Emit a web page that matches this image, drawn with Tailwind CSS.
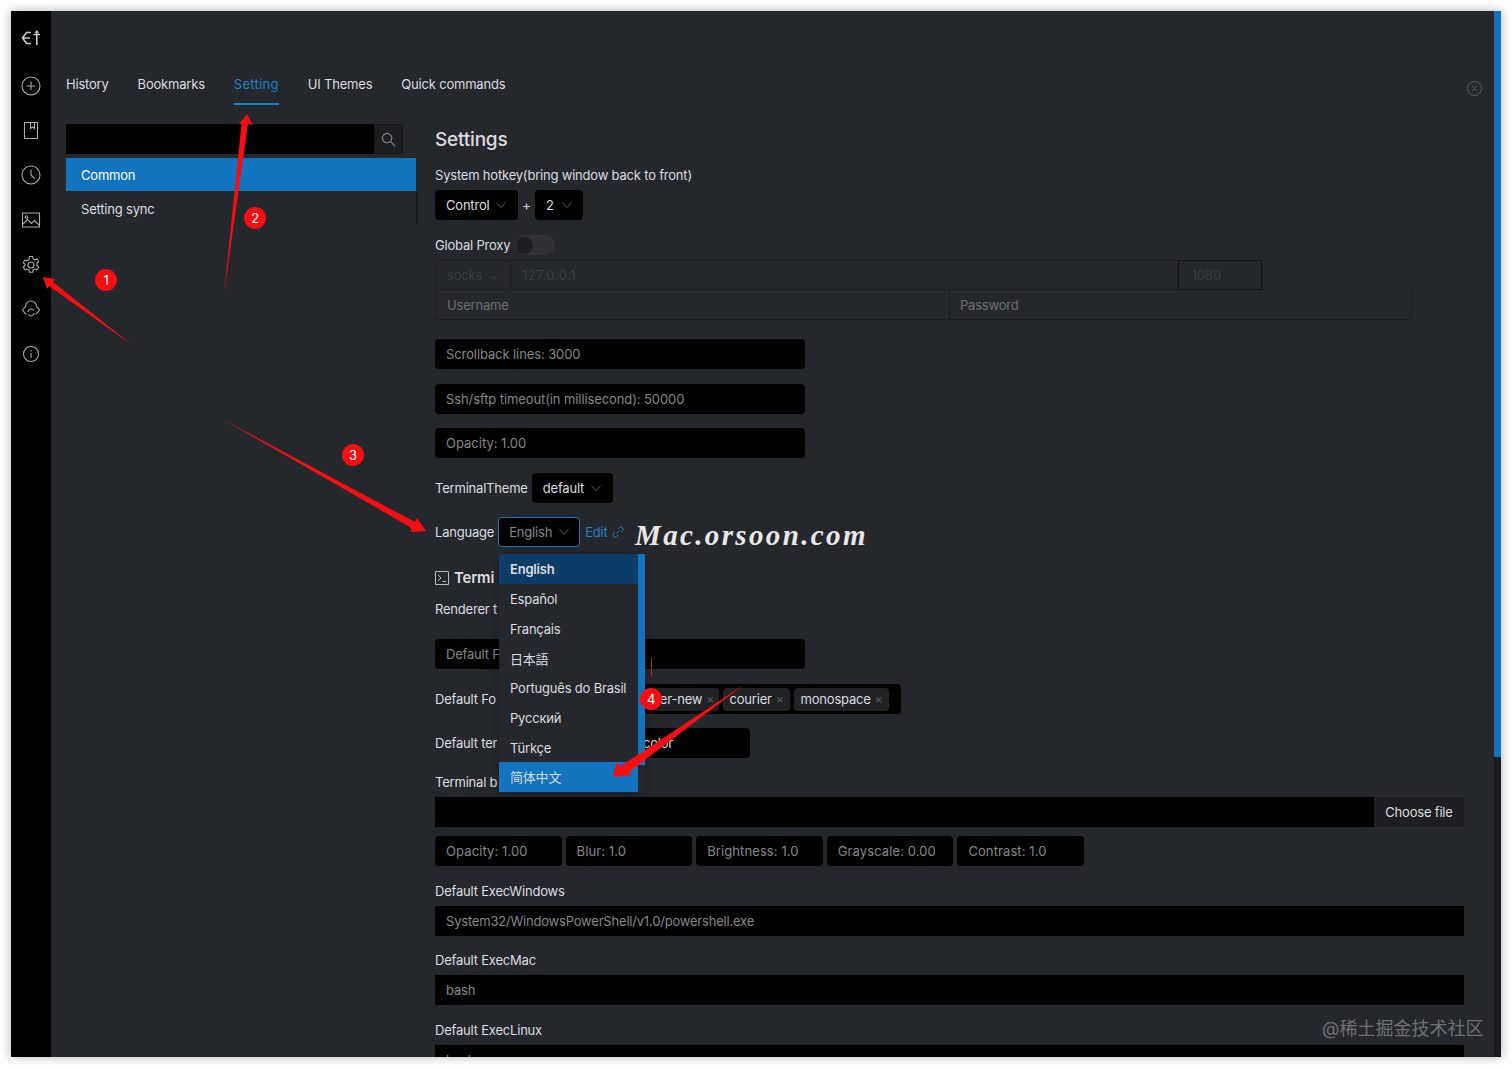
<!DOCTYPE html>
<html lang="en">
<head>
  <meta charset="UTF-8">
  <title>Electerm settings</title>
  <script src="https://cdn.jsdelivr.net/npm/@tailwindcss/browser@4"></script>
</head>
<body class="bg-white font-['Inter','Noto_Sans_CJK_SC',sans-serif] text-[13px] leading-[20px] tracking-[-0.2px] text-[#dcdde0]">
  <div class="p-[11px] h-[1068px] w-[1512px] overflow-hidden">
    <!-- app window -->
    <div class="relative flex h-[1046px] w-[1490px] overflow-hidden bg-[#24272c] shadow-[0_0_10px_rgba(0,0,0,0.3)]">

      <!-- icon rail -->
      <div class="w-10 shrink-0 bg-black flex flex-col items-center text-[#a9abae]">
        <div class="h-[65px] pt-[17px] text-[#c9cacc]">
          <svg width="20" height="20" viewBox="0 0 20 20" fill="none" stroke="currentColor" stroke-width="1.6"><path d="M10 4.500H5.500L1.500 10 5.500 15.500H10M2.500 10H9"/><path d="M12.500 6.500H19M15.800 3V17"/><path d="M14 5l1.800-2.500L17.600 5" stroke-width="1"/></svg>
        </div>
        <div class="flex flex-col items-center gap-[24.700px]">
          <svg width="20" height="20" viewBox="0 0 20 20" fill="none" stroke="currentColor" stroke-width="1.100"><circle cx="10" cy="10" r="9"/><path d="M10 5.500v9M5.500 10h9"/></svg>
          <svg width="20" height="20" viewBox="0 0 20 20" fill="none" stroke="currentColor" stroke-width="1.100"><path d="M3.500 1.500h13v16h-13z"/><path d="M9.500 1.500v6l2-1.500 2 1.500v-6"/></svg>
          <svg width="20" height="20" viewBox="0 0 20 20" fill="none" stroke="currentColor" stroke-width="1.100"><circle cx="10" cy="10" r="9"/><path d="M10 4.500V10l3.500 3.500"/></svg>
          <svg width="20" height="20" viewBox="0 0 20 20" fill="none" stroke="currentColor" stroke-width="1.100"><path d="M1.500 3h17v14h-17z"/><path d="M1.500 14.500l5-5 4 4 3-3 5 5"/><circle cx="5.500" cy="7" r="1.300"/></svg>
          <svg width="20" height="20" viewBox="0 0 20 20" fill="none" stroke="currentColor" stroke-width="1.100"><circle cx="10" cy="10" r="3"/><path d="M8.400 1.500h3.200l.5 2.400 1.700.9 2.300-.9 1.600 2.800-1.800 1.600v2.200l1.800 1.600-1.600 2.800-2.300-.9-1.700.9-.5 2.400H8.400l-.5-2.400-1.700-.9-2.300.9-1.600-2.800 1.800-1.600V9.300L2.300 7.700l1.600-2.800 2.300.9 1.700-.9z"/></svg>
          <svg width="20" height="20" viewBox="0 0 20 20" fill="none" stroke="currentColor" stroke-width="1.100"><path d="M5.500 15H4.500l-3-4 3-3.500a5.500 5.500 0 0 1 11 0l3 3.500-3 4h-1"/><path d="M6.800 13a3.300 3.300 0 0 1 6-1.500M13.200 14a3.300 3.300 0 0 1-6 1.500"/></svg>
          <svg width="20" height="20" viewBox="0 0 20 20" fill="none" stroke="currentColor" stroke-width="1.100"><circle cx="10" cy="10" r="7.500"/><path d="M10 9v5M10 6v1.500"/></svg>
        </div>
      </div>

      <!-- main area -->
      <div class="flex-1 min-w-0 flex flex-col pl-[15px]">
        <!-- tabs -->
        <div class="mt-[62px] h-[32px] flex gap-[29px] shrink-0">
          <div class="h-[32px] pt-px">History</div>
          <div class="h-[32px] pt-px">Bookmarks</div>
          <div class="h-[32px] pt-px text-[#1f7fc9] border-b-2 border-[#1f7fc9] tracking-[0.3px]">Setting</div>
          <div class="h-[32px] pt-px">UI Themes</div>
          <div class="h-[32px] pt-px">Quick commands</div>
        </div>

        <div class="flex flex-1 min-h-0 mt-[19px]">
          <!-- left list -->
          <div class="w-[350px] shrink-0">
            <div class="flex h-[30px] w-[337px]">
              <div class="flex-1 bg-black"></div>
              <div class="w-[29px] bg-[#1c1e21] border border-[#15171a] flex items-center justify-center text-[#85878b]">
                <svg width="15" height="15" viewBox="0 0 16 16" fill="none" stroke="currentColor" stroke-width="1.200"><circle cx="6.500" cy="6.500" r="5"/><path d="M10 10l5 5"/></svg>
              </div>
            </div>
            <div class="h-[33px] mt-[4px] pl-[15px] flex items-center bg-[#1273bf] text-white">Common</div>
            <div class="h-[36px] pl-[15px] flex items-center">Setting sync</div>
          </div>
          <div class="w-[2px] h-[33px] mt-[67px] bg-[#191b1f]"></div>

          <!-- settings form -->
          <div class="ml-[17px] w-[1029px] relative flex flex-col *:shrink-0">
            <div class="text-[19px] leading-[28px] font-medium mt-[2px]">Settings</div>
            <div class="mt-[11px]">System hotkey(bring window back to front)</div>
            <div class="mt-[5px] flex items-center h-[30px]">
              <div class="h-[30px] w-[83px] bg-black rounded-sm flex items-center pl-[11px] gap-[7px]">Control <svg class="text-[#55585c]" width="10" height="6" viewBox="0 0 10 6" fill="none" stroke="currentColor"><path d="M.5.500L5 5.500 9.500.500"/></svg></div>
              <span class="w-[17px] text-center">+</span>
              <div class="h-[30px] w-[48px] bg-black rounded-sm flex items-center pl-[11px] gap-[8px]">2 <svg class="text-[#55585c]" width="10" height="6" viewBox="0 0 10 6" fill="none" stroke="currentColor"><path d="M.5.500L5 5.500 9.500.500"/></svg></div>
            </div>
            <div class="mt-[15px] h-[20px] flex items-center gap-[5px]">Global Proxy
              <div class="w-10 h-[20px] rounded-full bg-[#2f3136] pl-[1px] flex items-center"><div class="w-[17px] h-[17px] rounded-full bg-[#1c1e22]"></div></div>
            </div>
            <div class="mt-[5px] flex h-[30px] w-[827px] border border-[#1c1e21] text-[#3a3d42]">
              <div class="w-[75px] border-r border-[#191b1e] pl-[11px] flex items-center">socks <span class="ml-[8px] text-[10px]">⌄</span></div>
              <div class="flex-1 pl-[11px] flex items-center tracking-[0.5px]">127.0.0.1</div>
              <div class="w-[84px] -my-px -mr-px border border-[#111316] pl-[13px] flex items-center">1080</div>
            </div>
            <div class="flex h-[30px] w-[977px] border border-t-0 border-[#1c1e21] text-[#6d7074]">
              <div class="w-[514px] border-r border-[#1c1e21] pl-[11px] flex items-center">Username</div>
              <div class="flex-1 pl-[10px] flex items-center">Password</div>
            </div>

            <div class="mt-[19px] w-[370px] h-[30px] bg-black rounded-sm pl-[11px] flex items-center text-[#85878b] tracking-[-0.1px]">Scrollback lines: 3000</div>
            <div class="mt-[15px] w-[370px] h-[30px] bg-black rounded-sm pl-[11px] flex items-center text-[#85878b] tracking-[-0.1px]">Ssh/sftp timeout(in millisecond): 50000</div>
            <div class="mt-[14px] w-[370px] h-[30px] bg-black rounded-sm pl-[11px] flex items-center text-[#85878b] tracking-normal">Opacity: 1.00</div>

            <div class="mt-[15px] h-[30px] flex items-center gap-[4px]">TerminalTheme
              <div class="h-[30px] w-[81px] bg-black rounded-sm flex items-center pl-[11px] gap-[7px]">default <svg class="text-[#55585c]" width="10" height="6" viewBox="0 0 10 6" fill="none" stroke="currentColor"><path d="M.5.500L5 5.500 9.500.500"/></svg></div>
            </div>
            <div class="mt-[14px] h-[30px] flex items-center gap-[4px]">Language
              <div class="h-[30px] w-[82px] bg-black border border-[#1b77bd] rounded-sm flex items-center pl-[10px] gap-[7px] text-[#85878b]">English <svg class="text-[#55585c]" width="10" height="6" viewBox="0 0 10 6" fill="none" stroke="currentColor"><path d="M.5.500L5 5.500 9.500.500"/></svg></div>
              <span class="text-[#1f7fc9] flex items-center gap-[4px] ml-px">Edit <svg width="12" height="12" viewBox="0 0 12 12" fill="none" stroke="currentColor"><path d="M4.500 7.500l3-3M6 3l1.500-1.500a2.100 2.100 0 0 1 3 3L9 6M6 9l-1.500 1.500a2.100 2.100 0 0 1-3-3L3 6"/></svg></span>
            </div>

            <div class="mt-[20px] h-[22px] flex items-center gap-[5px]">
              <svg class="text-[#b9babd]" width="14" height="14" viewBox="0 0 14 14" fill="none" stroke="currentColor"><path d="M.5.500h13v13H.5zM3 4l3 3-3 3M7.500 10.500H11"/></svg>
              <span class="text-[15px] font-semibold">Termi</span>
            </div>
            <div class="mt-[10px]">Renderer t</div>
            <div class="mt-[20px] w-[370px] h-[30px] bg-black rounded-sm pl-[11px] flex items-center text-[#85878b]"><span>Default F</span></div>
            <div class="mt-[15px] h-[30px] flex items-center">
              <span class="w-[64px] whitespace-nowrap">Default Fo</span>
              <div class="ml-[86px] w-[316px] h-[30px] bg-black rounded-sm flex items-center justify-end gap-[4px] pr-[12px]">
                <span class="h-[23px] w-[66px] bg-[#202226] rounded-sm flex items-center justify-end pr-[5px] gap-[4px] whitespace-nowrap"><span>er-new</span> <span class="text-[#55585c] text-[12px]">×</span></span>
                <span class="h-[23px] w-[67px] bg-[#202226] rounded-sm flex items-center justify-center gap-[4px]"><span>courier</span> <span class="text-[#55585c] text-[12px]">×</span></span>
                <span class="h-[23px] w-[95px] bg-[#202226] rounded-sm flex items-center justify-center gap-[4px]"><span>monospace</span> <span class="text-[#55585c] text-[12px]">×</span></span>
              </div>
            </div>
            <div class="mt-[14px] h-[30px] flex items-center">
              <span class="w-[64px] whitespace-nowrap">Default ter</span>
              <div class="w-[251px] h-[30px] bg-black rounded-sm flex items-center pl-[144px]"><span>color</span></div>
            </div>
            <div class="mt-[14px]">Terminal b</div>
            <div class="mt-[5px] flex h-[30px]">
              <div class="flex-1 bg-black"></div>
              <div class="w-[90px] bg-[#1c1e21] flex items-center justify-center">Choose file</div>
            </div>
            <div class="mt-[9px] flex gap-[4px] h-[30px] text-[#85878b] tracking-[0.1px]">
              <div class="w-[126.600px] rounded-sm bg-black pl-[11px] flex items-center">Opacity: 1.00</div>
              <div class="w-[126.600px] rounded-sm bg-black pl-[11px] flex items-center">Blur: 1.0</div>
              <div class="w-[126.600px] rounded-sm bg-black pl-[11px] flex items-center">Brightness: 1.0</div>
              <div class="w-[126.600px] rounded-sm bg-black pl-[11px] flex items-center">Grayscale: 0.00</div>
              <div class="w-[126.600px] rounded-sm bg-black pl-[11px] flex items-center">Contrast: 1.0</div>
            </div>
            <div class="mt-[15px]">Default ExecWindows</div>
            <div class="mt-[5px] h-[30px] bg-black pl-[11px] flex items-center text-[#85878b]">System32/WindowsPowerShell/v1.0/powershell.exe</div>
            <div class="mt-[14px]">Default ExecMac</div>
            <div class="mt-[5px] h-[30px] bg-black pl-[11px] flex items-center text-[#85878b]">bash</div>
            <div class="mt-[15px]">Default ExecLinux</div>
            <div class="mt-[5px] h-[30px] bg-black pl-[11px] flex items-center text-[#85878b]">bash</div>
          </div>
        </div>
      </div>

      <!-- scrollbar -->
      <div class="w-[7px] shrink-0 bg-[#1a1c1f] self-stretch">
        <div class="h-[746px] bg-[#1273bf]"></div>
      </div>

      <!-- close button -->
      <svg class="absolute left-[1456px] top-[70px] text-[#5d6064]" width="15" height="15" viewBox="0 0 15 15" fill="none" stroke="currentColor"><circle cx="7.500" cy="7.500" r="7"/><path d="M5 5l5 5M10 5l-5 5"/></svg>

      <!-- language dropdown -->
      <div class="absolute left-[488px] top-[543px] w-[146px] h-[238px] shadow-[0_2px_8px_rgba(0,0,0,0.3)] bg-[#24272c]">
        <div class="absolute right-0 top-0 w-[7px] h-[211px] bg-[#1273bf]"></div>
        <div class="w-[139px]">
          <div class="h-[30px] pl-[11px] flex items-center font-semibold bg-[#0d3d66]">English</div>
          <div class="h-[30px] pl-[11px] flex items-center">Español</div>
          <div class="h-[30px] pl-[11px] flex items-center">Français</div>
          <div class="h-[29px] pl-[11px] flex items-center">日本語</div>
          <div class="h-[30px] pl-[11px] flex items-center whitespace-nowrap">Português do Brasil</div>
          <div class="h-[30px] pl-[11px] flex items-center">Русский</div>
          <div class="h-[29px] pl-[11px] flex items-center">Türkçe</div>
          <div class="h-[30px] pl-[11px] flex items-center bg-[#1273bf]">简体中文</div>
        </div>
      </div>

      <!-- overlay annotations -->
      <svg class="absolute left-0 top-0 pointer-events-none" width="1490" height="1046" viewBox="11 11 1490 1046" fill="#f50f12">
        <polygon points="43,277 55,279 53,282 132,345 49,286 47,289"/>
        <polygon points="247,114 253,125 248,124 224,294 241.500,124 239,124"/>
        <polygon points="426,531 417,518 415,522 224,420 410,527 412,532"/>
        <polygon points="613,777 616,763 621,766 745,684 629,772 632,775"/>
        <rect x="651" y="658" width="1" height="18" fill="#b0262b"/>
      </svg>
      <div class="absolute left-[84px] top-[258px] w-[22px] h-[22px] rounded-full bg-[#f50f12] text-white text-[13px] flex items-center justify-center">1</div>
      <div class="absolute left-[233px] top-[196px] w-[22px] h-[22px] rounded-full bg-[#f50f12] text-white text-[13px] flex items-center justify-center">2</div>
      <div class="absolute left-[331px] top-[433px] w-[22px] h-[22px] rounded-full bg-[#f50f12] text-white text-[13px] flex items-center justify-center">3</div>
      <div class="absolute left-[629px] top-[677px] w-[22px] h-[22px] rounded-full bg-[#f50f12] text-white text-[13px] flex items-center justify-center">4</div>

      <!-- watermarks -->
      <div class="absolute left-[624px] top-[506px] font-['Liberation_Serif',serif] italic font-bold text-[29px] leading-[36px] tracking-[2.360px] text-[#e8e8e8]">Mac.orsoon.com</div>
      <div class="absolute left-[1311px] top-[1005px] text-[18px] leading-[26px] tracking-normal text-[#6f7174]">@稀土掘金技术社区</div>
    </div>
  </div>
</body>
</html>
